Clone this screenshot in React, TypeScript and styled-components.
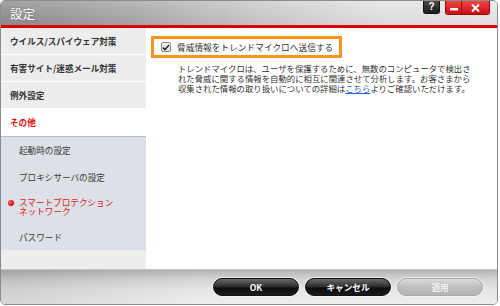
import React from 'react';
import styled, { createGlobalStyle } from 'styled-components';

const GlobalStyle = createGlobalStyle`
  html, body {
    margin: 0;
    padding: 0;
    background: #ffffff;
  }
  body {
    font-family: 'Noto Sans CJK JP', 'Noto Sans', sans-serif;
  }
`;

const menu = [
  { label: 'ウイルス/スパイウェア対策' },
  { label: '有害サイト/迷惑メール対策' },
  { label: '例外設定' },
];

const subMenu = [
  { label: '起動時の設定', height: 27 },
  { label: 'プロキシサーバの設定', height: 26 },
  { label: 'スマートプロテクション\nネットワーク', height: 34, active: true },
  { label: 'パスワード', height: 26 },
];

const App = () => {
  return (
    <>
      <GlobalStyle />
      <Window>
        <TitleBar>
          <Title>設定</Title>
          <Controls>
            <HelpButton>?</HelpButton>
            <RedGroup>
              <MinButton>
                <svg width='8' height='3' viewBox='0 0 8 3'>
                  <rect x='0' y='0' width='8' height='2.4' fill='#fff' />
                </svg>
              </MinButton>
              <CloseButton>
                <svg width='9' height='8' viewBox='0 0 9 8'>
                  <path d='M1 0.5 L8 7.5 M8 0.5 L1 7.5' stroke='#fff' strokeWidth='2' />
                </svg>
              </CloseButton>
            </RedGroup>
          </Controls>
        </TitleBar>
        <Body>
          <Sidebar>
            {menu.map((m) => (
              <MenuItem key={m.label}>{m.label}</MenuItem>
            ))}
            <MenuItem $selected>その他</MenuItem>
            <SubList>
              {subMenu.map((s) => (
                <SubItem key={s.label} $active={s.active} style={{ height: s.height }}>
                  {s.active && <Dot />}
                  <span>
                    {s.label.split('\n').map((line, i) => (
                      <React.Fragment key={i}>
                        {i > 0 && <br />}
                        {line}
                      </React.Fragment>
                    ))}
                  </span>
                </SubItem>
              ))}
            </SubList>
          </Sidebar>
          <Content>
            <Highlight>
              <CheckBox>
                <svg width='8' height='7' viewBox='0 0 8 7'>
                  <path d='M1 3.6 L3 5.6 L7 1' stroke='#222' strokeWidth='1.5' fill='none' />
                </svg>
              </CheckBox>
              <CheckLabel>脅威情報をトレンドマイクロへ送信する</CheckLabel>
            </Highlight>
            <Description>
              トレンドマイクロは、ユーザを保護するために、無数のコンピュータで検出さ
              <br />
              れた脅威に関する情報を自動的に相互に関連させて分析します。お客さまから
              <br />
              収集された情報の取り扱いについての詳細は<Link>こちら</Link>よりご確認いただけます。
            </Description>
          </Content>
        </Body>
        <Footer>
          <Button>OK</Button>
          <Button>キャンセル</Button>
          <Button $disabled>適用</Button>
        </Footer>
      </Window>
    </>
  );
};

export default App;

const Window = styled.div`
  width: 496px;
  height: 303px;
  border: 1px solid #8c8c8c;
  border-radius: 5px;
  overflow: hidden;
  display: flex;
  flex-direction: column;
  background: #ffffff;
`;

const TitleBar = styled.div`
  height: 24px;
  flex-shrink: 0;
  display: flex;
  justify-content: space-between;
  align-items: flex-start;
  border-bottom: 3px solid #e00000;
  background:
    linear-gradient(to bottom, rgba(255, 255, 255, 0.18), rgba(0, 0, 0, 0.04)),
    linear-gradient(to right, #8d8d8d 0%, #a6a6a6 25%, #c8c8c8 50%, #e2e2e2 75%, #e8e8e8 100%);
`;

const Title = styled.div`
  color: #ffffff;
  font-size: 12.5px;
  line-height: 25px;
  padding-left: 9px;
  text-shadow: 0 0 2px rgba(0, 0, 0, 0.35);
`;

const Controls = styled.div`
  display: flex;
  gap: 5px;
  padding-right: 7px;
`;

const HelpButton = styled.div`
  width: 17px;
  height: 13px;
  border-radius: 0 0 3px 3px;
  background: linear-gradient(to bottom, #4a4a4a, #1a1a1a);
  border: 1px solid #111;
  border-top: none;
  box-sizing: border-box;
  color: #fff;
  font-family: 'Liberation Sans', sans-serif;
  font-weight: bold;
  font-size: 10px;
  line-height: 12px;
  text-align: center;
`;

const RedGroup = styled.div`
  display: flex;
  height: 13px;
  border-radius: 0 0 3px 3px;
  overflow: hidden;
  border: 1px solid #a00000;
  border-top: none;
`;

const MinButton = styled.div`
  width: 16px;
  display: flex;
  align-items: flex-end;
  justify-content: center;
  padding-bottom: 3px;
  box-sizing: border-box;
  background: linear-gradient(to bottom, #f04545, #c80f14);
  border-right: 1px solid #9c0c0c;
`;

const CloseButton = styled.div`
  width: 27px;
  display: flex;
  align-items: center;
  justify-content: center;
  background: linear-gradient(to bottom, #f04545, #c80f14);
`;

const Body = styled.div`
  flex: 1;
  display: flex;
  min-height: 0;
`;

const Sidebar = styled.div`
  width: 145px;
  flex-shrink: 0;
  background: #ededed;
  display: flex;
  flex-direction: column;
`;

const MenuItem = styled.div<{ $selected?: boolean }>`
  height: 26px;
  border-bottom: 1px solid #ffffff;
  padding-left: 9px;
  display: flex;
  align-items: center;
  font-size: 8.6px;
  font-weight: bold;
  color: ${(p) => (p.$selected ? '#e01010' : '#333333')};
  background: ${(p) => (p.$selected ? '#ffffff' : 'transparent')};
  white-space: nowrap;
`;

const SubList = styled.div`
  background: #dde0e6;
  border-top: 1px solid #b9bdc4;
  display: flex;
  flex-direction: column;
`;

const SubItem = styled.div<{ $active?: boolean }>`
  position: relative;
  display: flex;
  align-items: center;
  padding-left: 18px;
  font-size: 8.6px;
  line-height: 8.6px;
  color: ${(p) => (p.$active ? '#d81c1c' : '#3a3a3a')};
  white-space: nowrap;
`;

const Dot = styled.span`
  position: absolute;
  left: 7px;
  top: 10px;
  width: 6px;
  height: 6px;
  border-radius: 50%;
  background: radial-gradient(circle at 35% 35%, #ff6a6a, #d00000 70%);
`;

const Content = styled.div`
  flex: 1;
  background: #ffffff;
  padding: 8px 0 0 5px;
`;

const Highlight = styled.div`
  width: 191px;
  height: 22px;
  box-sizing: border-box;
  border: 3px solid #f7931e;
  display: flex;
  align-items: center;
  gap: 6px;
  padding-left: 7px;
`;

const CheckBox = styled.div`
  width: 10px;
  height: 10px;
  box-sizing: border-box;
  border: 1px solid #8a8a8a;
  border-radius: 2px;
  background: linear-gradient(to bottom, #f4f4f4, #dcdcdc);
  display: flex;
  align-items: center;
  justify-content: center;
`;

const CheckLabel = styled.span`
  font-size: 8.7px;
  color: #333333;
  white-space: nowrap;
`;

const Description = styled.p`
  margin: 5px 0 0 27px;
  font-size: 8.4px;
  line-height: 10px;
  color: #333333;
  white-space: nowrap;
`;

const Link = styled.span`
  color: #1a5fd6;
  text-decoration: underline;
`;

const Footer = styled.div`
  height: 35px;
  flex-shrink: 0;
  display: flex;
  justify-content: flex-end;
  align-items: flex-start;
  gap: 6px;
  padding: 8px 14px 0 0;
  box-sizing: border-box;
  border-top: 1px solid #c8c8c8;
  background:
    linear-gradient(to right, rgba(0, 0, 0, 0.1), rgba(0, 0, 0, 0) 40%),
    linear-gradient(to bottom, #b4b4b4 0%, #d6d6d6 30%, #e6e6e6 60%, #eeeeee 100%);
`;

const Button = styled.div<{ $disabled?: boolean }>`
  width: 86px;
  height: 18px;
  box-sizing: border-box;
  border-radius: 9px;
  border: 1px solid ${(p) => (p.$disabled ? '#a8a8a8' : '#111111')};
  box-shadow: 0 0 0 1px rgba(255, 255, 255, 0.6);
  background: ${(p) =>
    p.$disabled
      ? 'linear-gradient(to bottom, #dadada, #bdbdbd 55%, #b4b4b4)'
      : 'linear-gradient(to bottom, #6a6a6a, #2a2a2a 50%, #0c0c0c 55%, #1a1a1a)'};
  color: ${(p) => (p.$disabled ? '#f2f2f2' : '#ffffff')};
  font-size: 8.6px;
  font-weight: bold;
  line-height: 16px;
  text-align: center;
`;
